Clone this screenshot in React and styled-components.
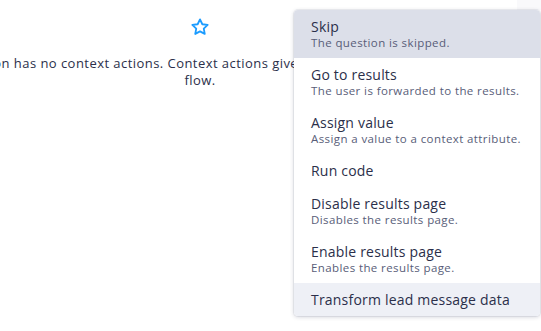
import React from 'react'
import styled, { createGlobalStyle } from 'styled-components'

const GlobalStyle = createGlobalStyle`
  html, body {
    margin: 0;
    padding: 0;
    background: #ffffff;
    overflow: hidden;
  }
  body {
    font-family: "Open Sans", Lato, sans-serif;
    color: #2b2f4a;
  }
`

const actions = [
  { title: 'Skip', description: 'The question is skipped.', state: 'active' },
  { title: 'Go to results', description: 'The user is forwarded to the results.' },
  { title: 'Assign value', description: 'Assign a value to a context attribute.' },
  { title: 'Run code' },
  { title: 'Disable results page', description: 'Disables the results page.' },
  { title: 'Enable results page', description: 'Enables the results page.' },
  { title: 'Transform lead message data', state: 'hover' },
]

const Page = styled.div`
  position: relative;
  width: 541px;
  height: 331px;
  overflow: hidden;
`

const Corner = styled.div`
  position: absolute;
  top: 0;
  right: 0;
  width: 24px;
  height: 10px;
  background: #f9f9fb;
`

const Empty = styled.div`
  width: 800px;
  margin-left: -200px;
  padding-top: 17px;
  display: flex;
  flex-direction: column;
  align-items: center;
  gap: 18px;
`

const Message = styled.p`
  margin: 0;
  font-size: 13px;
  line-height: 17px;
  letter-spacing: 0.45px;
  text-align: center;
  color: #2b2f4a;
  white-space: nowrap;
`

const Menu = styled.ul`
  position: absolute;
  top: 10px;
  left: 294px;
  width: 246px;
  margin: 0;
  padding: 0;
  list-style: none;
  background: #ffffff;
  border-radius: 4px;
  overflow: hidden;
  box-shadow: 0 1px 4px rgba(40, 45, 80, 0.22), 0 0 0 1px rgba(40, 45, 80, 0.06);
`

const Item = styled.li`
  padding: 8px 17px 8px 17px;
  background: ${p => (p.$state === 'active' ? '#dcdfe9' : p.$state === 'hover' ? '#eef0f6' : 'transparent')};
  cursor: pointer;
`

const Title = styled.div`
  font-size: 14px;
  line-height: 17px;
  letter-spacing: 0.2px;
  color: #2b2f4a;
  white-space: nowrap;
`

const Description = styled.div`
  font-size: 11.5px;
  line-height: 15px;
  letter-spacing: 0.4px;
  color: #585d78;
  white-space: nowrap;
`

function StarIcon() {
  return (
    <svg width="20" height="20" viewBox="0 0 24 24" fill="none" stroke="#1c9cff" strokeWidth="2.2" strokeLinejoin="round">
      <path d="M12 2.8l2.8 5.9 6.4.8-4.7 4.4 1.2 6.4L12 17.2l-5.7 3.1 1.2-6.4-4.7-4.4 6.4-.8z" />
    </svg>
  )
}

export default function App() {
  return (
    <Page>
      <GlobalStyle />
      <Corner />
      <Empty>
        <StarIcon />
        <Message>
          This question has no context actions. Context actions give you better control over the
          <br />
          flow.
        </Message>
      </Empty>
      <Menu>
        {actions.map(a => (
          <Item key={a.title} $state={a.state}>
            <Title>{a.title}</Title>
            {a.description && <Description>{a.description}</Description>}
          </Item>
        ))}
      </Menu>
    </Page>
  )
}
